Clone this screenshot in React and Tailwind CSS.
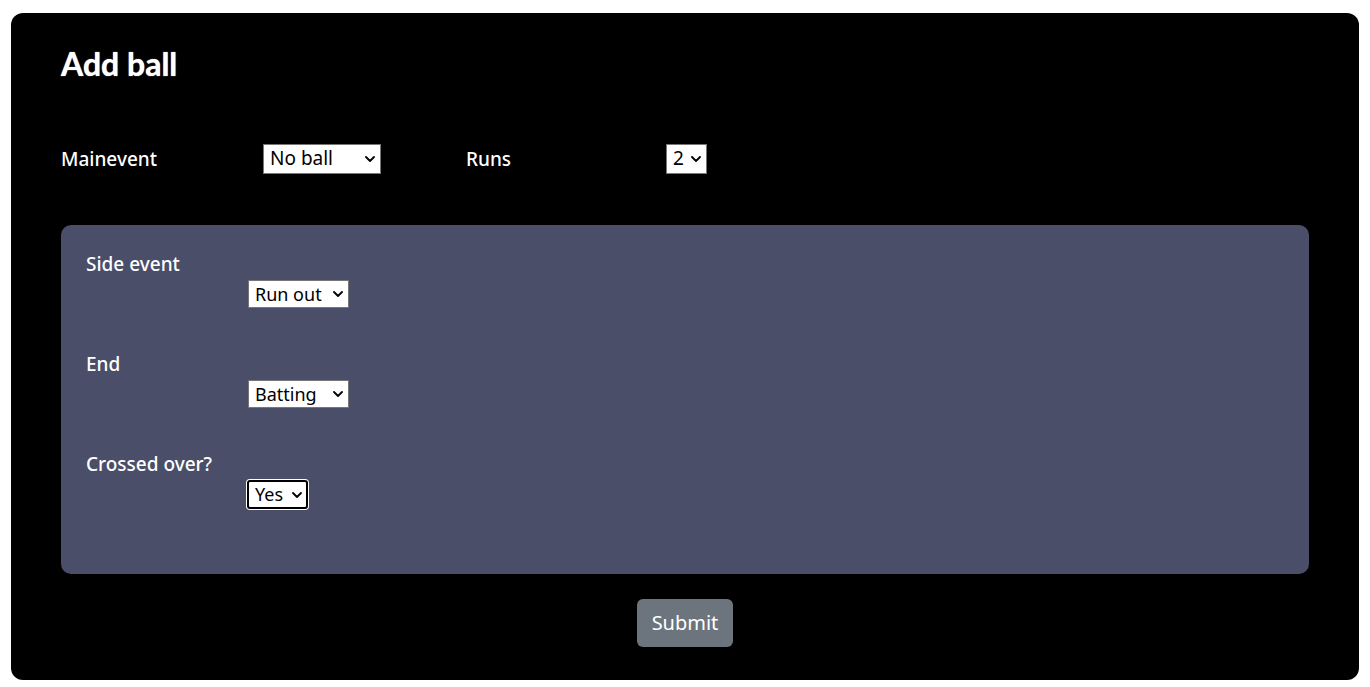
import { useState } from "react";

const labelCls = "text-[19px] font-medium text-white leading-6";

function Chevron() {
    return (
        <svg viewBox="0 0 10 6" className="pointer-events-none absolute right-[6px] top-1/2 h-[6px] w-[10px] -translate-y-1/2">
            <path d="M1 1l4 4 4-4" fill="none" stroke="#000" strokeWidth="1.8" strokeLinecap="round" strokeLinejoin="round" />
        </svg>
    );
}

function Pick({ value, options, onChange, className = "", size = "text-[19px]", focused = false }) {
    return (
        <div className={"relative flex " + className}>
            <select
                value={value}
                onChange={(e) => onChange(e.target.value)}
                className={
                    "h-full w-full appearance-none bg-white py-0 pl-[6px] pr-[20px] leading-[1.35] text-black outline-none " + size + " " +
                    (focused ? "rounded-[3px] border-2 border-black ring-1 ring-white" : "border border-[#767676]")
                }
                style={{ fontFamily: "'Noto Sans', sans-serif" }}
            >
                {options.map((o) => <option key={o}>{o}</option>)}
            </select>
            <Chevron />
        </div>
    );
}

export default function App() {
    const [main, setMain] = useState("No ball");
    const [runs, setRuns] = useState("2");
    const [side, setSide] = useState("Run out");
    const [end, setEnd] = useState("Batting");
    const [crossed, setCrossed] = useState("Yes");

    return (
        <div className="min-h-screen bg-white pt-[13px] px-[11px] pb-[7px]" style={{ fontFamily: "'Noto Sans', 'Open Sans', sans-serif" }}>
            <div className="rounded-[12px] bg-black px-[50px] pt-[32px] pb-[33px]">
                <h2 className="text-[32px] font-bold leading-[38px] text-white [text-shadow:0_0_1px_#fff]" style={{ fontFamily: "Lato, sans-serif" }}>Add ball</h2>

                <div className="mt-[61px] flex items-center">
                    <div className={labelCls + " w-[202px]"}>Mainevent</div>
                    <Pick value={main} onChange={setMain} options={["No ball", "Wide", "Bye", "Leg bye", "Normal"]} className="h-[30px] w-[118px]" />
                    <div className={labelCls + " ml-[85px] w-[200px]"}>Runs</div>
                    <Pick value={runs} onChange={setRuns} options={["0", "1", "2", "3", "4", "5", "6"]} className="h-[30px] w-[41px]" />
                </div>

                <div className="mt-[51px] rounded-[10px] bg-[#4a4e69] px-[25px] pt-[27px] pb-[65px]">
                    <div className="flex flex-col gap-[44px]">
                        <div>
                            <div className={labelCls}>Side event</div>
                            <Pick value={side} onChange={setSide} options={["Run out", "Caught", "Stumped", "None"]} size="text-[18px]" className="mt-[4px] ml-[162px] h-[28px] w-[101px]" />
                        </div>
                        <div>
                            <div className={labelCls}>End</div>
                            <Pick value={end} onChange={setEnd} options={["Batting", "Bowling"]} size="text-[18px]" className="mt-[4px] ml-[162px] h-[28px] w-[101px]" />
                        </div>
                        <div>
                            <div className={labelCls}>Crossed over?</div>
                            <Pick value={crossed} onChange={setCrossed} options={["Yes", "No"]} size="text-[18px]" className="mt-[4px] ml-[161px] h-[29px] w-[61px]" focused />
                        </div>
                    </div>
                </div>

                <div className="mt-[25px] flex justify-center">
                    <button className="h-[48px] w-[96px] rounded-[6px] bg-[#6c757d] text-[20px] text-white">Submit</button>
                </div>
            </div>
        </div>
    );
}
